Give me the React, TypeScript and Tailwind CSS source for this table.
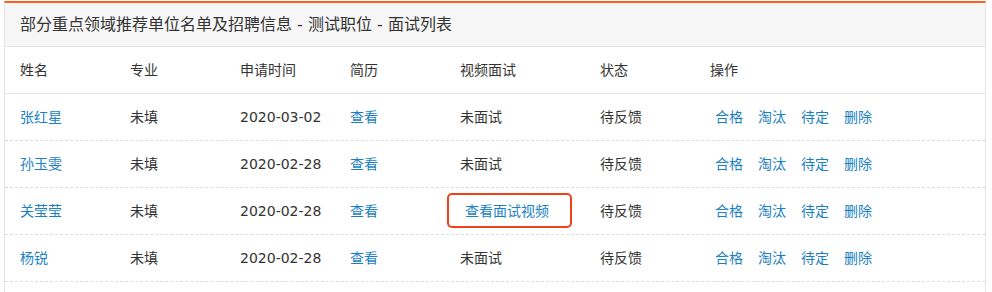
const rows = [
  { name: "张红星", major: "未填", date: "2020-03-02", video: false },
  { name: "孙玉雯", major: "未填", date: "2020-02-28", video: false },
  { name: "关莹莹", major: "未填", date: "2020-02-28", video: true },
  { name: "杨锐", major: "未填", date: "2020-02-28", video: false },
];

const actions = ["合格", "淘汰", "待定", "删除"];

function Cells({ children }: { children: React.ReactNode }) {
  return (
    <div className="grid h-[46px] grid-cols-[110px_110px_110px_110px_140px_110px_1fr] items-center pl-[15px]">
      {children}
    </div>
  );
}

export default function App() {
  return (
    <div className="h-[292px] bg-white pt-[1px] font-['DejaVu_Sans','Noto_Sans_CJK_SC',sans-serif] text-[14px] text-[#333]">
      <section className="ml-[4px] h-[291px] w-[982px] border-x border-t-2 border-x-[#e3e3e3] border-t-[#ff5f1f]">
        <div className="flex h-[44px] items-center border-b border-[#e6e6e6] bg-[#f6f6f6] pl-[15px] text-[16px]">
          部分重点领域推荐单位名单及招聘信息 - 测试职位 - 面试列表
        </div>

        <div className="border-b border-[#e6e6e6]">
          <Cells>
            <span>姓名</span>
            <span>专业</span>
            <span>申请时间</span>
            <span>简历</span>
            <span>视频面试</span>
            <span>状态</span>
            <span>操作</span>
          </Cells>
        </div>

        {rows.map((row) => (
          <div key={row.name} className="border-b border-dashed border-[#dcdcdc]">
            <Cells>
              <a className="text-[#1b7fc3]">{row.name}</a>
              <span>{row.major}</span>
              <span>{row.date}</span>
              <a className="text-[#1b7fc3]">查看</a>
              {row.video ? (
                <span className="pl-[5px]">
                  <a className="relative text-[#1b7fc3]">
                    查看面试视频
                    <span className="absolute -top-[10px] -bottom-[9px] -left-[18px] -right-[23px] rounded-[5px] border-2 border-[#f2411a]" />
                  </a>
                </span>
              ) : (
                <span>未面试</span>
              )}
              <span>待反馈</span>
              <div className="ml-[5px] flex gap-[15px]">
                {actions.map((a) => (
                  <a key={a} className="text-[#1b7fc3]">
                    {a}
                  </a>
                ))}
              </div>
            </Cells>
          </div>
        ))}
      </section>
    </div>
  );
}
